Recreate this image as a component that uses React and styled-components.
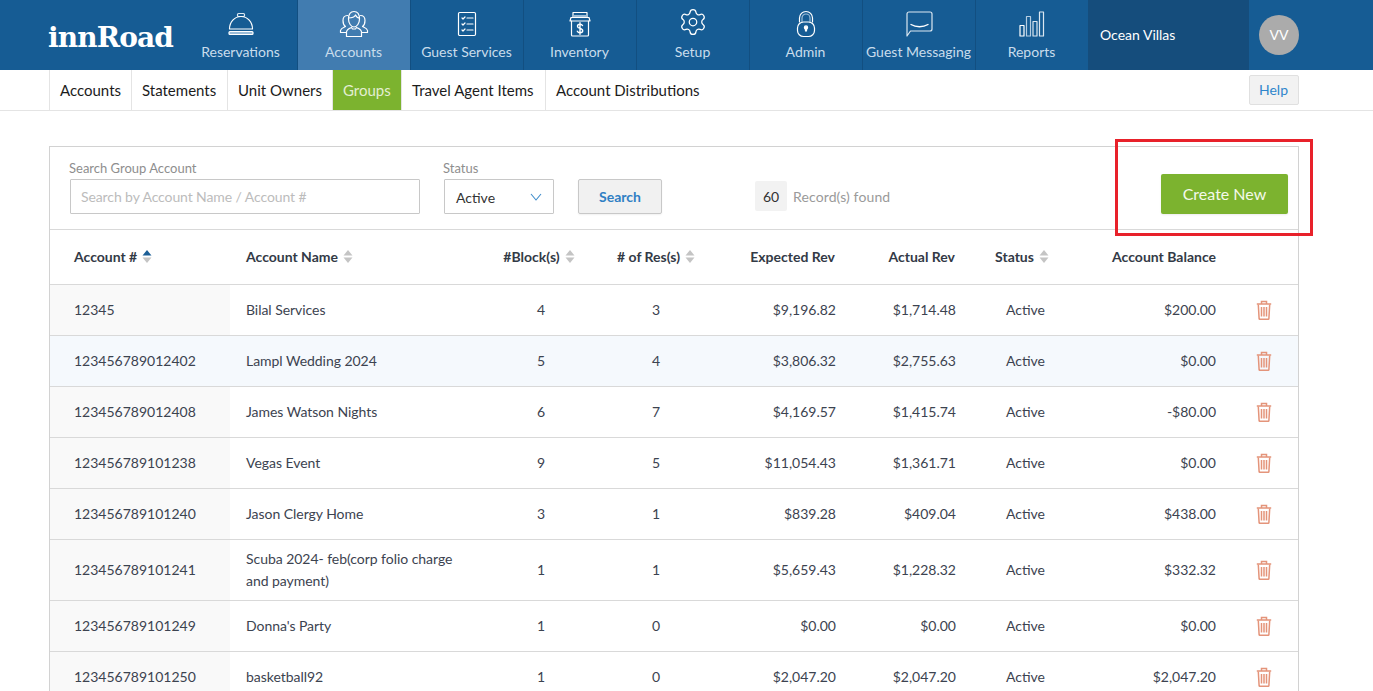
import styled, { createGlobalStyle } from 'styled-components';
import { Settings } from 'lucide-react';

const GlobalStyle = createGlobalStyle`
    html, body {
        margin: 0;
        height: 100%;
        overflow: hidden;
        background: #fff;
        font-family: Lato, "Open Sans", sans-serif;
        color: #3c4350;
    }
    * { box-sizing: border-box; }
`;

const Icon = ({ children }) => (
    <svg width="34" height="34" viewBox="0 0 34 34" fill="none" stroke="#fff" strokeWidth="1.2" strokeLinecap="round" strokeLinejoin="round">
        {children}
    </svg>
);

const BellIcon = () => (
    <Icon>
        <rect x="13.5" y="6.5" width="7" height="3" rx="1" stroke="#dbe7f1" />
        <path d="M5.5 22c0-7 5-12.5 11.5-12.5S28.5 15 28.5 22z" />
        <rect x="5" y="24.5" width="24" height="3" rx="1" fill="#9cbdd8" />
    </Icon>
);

const PeopleIcon = () => (
    <Icon>
        <path d="M11.5 12c0-5 2-7.5 5.5-7.5s5.5 2.5 5.5 7.5c0 4-2.5 8-5.5 8s-5.5-4-5.5-8z" />
        <path d="M11.5 11c3 0 6-1 7-3 .7 1.5 2.5 3 4 3" />
        <path d="M9.5 25c0-2.5 2.5-3.5 5-4.5l1 1.5h3l1-1.5c2.5 1 5 2 5 4.5v4.5h-15z" />
        <path d="M10.5 8.5c-3 0-4.5 2-4.5 5 0 2.5 1 5 2.5 6-1.500 1-4.500 1.500-5 4v2h6" />
        <path d="M23.5 8.5c3 0 4.5 2 4.5 5 0 2.5-1 5-2.5 6 1.500 1 4.500 1.500 5 4v2h-6" />
    </Icon>
);

const ChecklistIcon = () => (
    <Icon>
        <rect x="8.5" y="5.5" width="17" height="23" rx="1.2" />
        <path d="M12 11l1 1 2-2M12 17l1 1 2-2M12 23l1 1 2-2" />
        <path d="M17 11h6M17 17h6M17 23h6" />
    </Icon>
);

const InventoryIcon = () => (
    <Icon>
        <path d="M10 10V5.5h14V10" />
        <path d="M11 8h12v3H11z" fill="#9cbdd8" stroke="none" />
        <path d="M8 10.5h18l1 3.5H7z" />
        <path d="M8.5 14v14a1 1 0 0 0 1 1h15a1 1 0 0 0 1-1V14" />
        <path d="M19.5 18.5c-.5-1-1.5-1.3-2.5-1.3-1.5 0-2.5.7-2.5 2s1 1.8 2.5 2.2 2.7 1 2.7 2.3-1.2 2-2.7 2c-1.2 0-2.2-.5-2.7-1.5M17 15.8v11.4" strokeWidth="1.4" />
    </Icon>
);

const LockIcon = () => (
    <Icon>
        <path d="M10.5 15v-4a6.5 6.5 0 0 1 13 0v4" />
        <path d="M13 15v-4a4 4 0 0 1 8 0v4" stroke="#9cbdd8" />
        <rect x="8.5" y="15" width="17" height="14.5" rx="6" />
        <circle cx="17" cy="20.5" r="1.6" fill="#fff" />
        <path d="M16.5 21v3h1v-3" fill="#fff" />
    </Icon>
);

const ChatIcon = () => (
    <Icon>
        <path d="M5 7a2 2 0 0 1 2-2h21a2 2 0 0 1 2 2v15a2 2 0 0 1-2 2H8.5L5 29z" stroke="#dbe7f1" />
        <path d="M9 17.5c5 3 12 3 17 0" strokeWidth="1.4" />
    </Icon>
);

const BarsIcon = () => (
    <Icon>
        <rect x="5" y="18.5" width="4" height="10.5" />
        <rect x="11.5" y="9.5" width="4" height="19.5" stroke="#b4cde2" />
        <rect x="18" y="14.5" width="4" height="14.5" stroke="#dbe7f1" />
        <rect x="24.5" y="5" width="4" height="24" stroke="#dbe7f1" />
    </Icon>
);

const GearIcon = () => (
    <Settings size={30} color="#fff" strokeWidth={1} />
);

const NAV = [
    { label: 'Reservations', Glyph: BellIcon },
    { label: 'Accounts', Glyph: PeopleIcon, active: true },
    { label: 'Guest Services', Glyph: ChecklistIcon },
    { label: 'Inventory', Glyph: InventoryIcon },
    { label: 'Setup', Glyph: GearIcon },
    { label: 'Admin', Glyph: LockIcon },
    { label: 'Guest Messaging', Glyph: ChatIcon },
    { label: 'Reports', Glyph: BarsIcon },
];

const TABS = [
    { label: 'Accounts', width: 82 },
    { label: 'Statements', width: 96 },
    { label: 'Unit Owners', width: 105 },
    { label: 'Groups', width: 69 },
    { label: 'Travel Agent Items', width: 144 },
    { label: 'Account Distributions', width: 165 },
];

const ROWS = [
    ['12345', 'Bilal Services', '4', '3', '$9,196.82', '$1,714.48', '$200.00'],
    ['123456789012402', 'Lampl Wedding 2024', '5', '4', '$3,806.32', '$2,755.63', '$0.00'],
    ['123456789012408', 'James Watson Nights', '6', '7', '$4,169.57', '$1,415.74', '-$80.00'],
    ['123456789101238', 'Vegas Event', '9', '5', '$11,054.43', '$1,361.71', '$0.00'],
    ['123456789101240', 'Jason Clergy Home', '3', '1', '$839.28', '$409.04', '$438.00'],
    ['123456789101241', 'Scuba 2024- feb(corp folio charge and payment)', '1', '1', '$5,659.43', '$1,228.32', '$332.32'],
    ['123456789101249', "Donna's Party", '1', '0', '$0.00', '$0.00', '$0.00'],
    ['123456789101250', 'basketball92', '1', '0', '$2,047.20', '$2,047.20', '$2,047.20'],
];

const SortIcon = ({ active }) => (
    <SortSvg width="10" height="13" viewBox="0 0 10 13">
        <path d="M5 0l4.5 5.5h-9z" fill={active ? '#1b5e96' : '#c4c4c4'} />
        <path d="M5 13L.5 7.5h9z" fill="#c4c4c4" />
    </SortSvg>
);

const TrashIcon = () => (
    <svg width="16" height="20" viewBox="0 0 16 20" fill="none" stroke="#e4947a" strokeWidth="1.5">
        <path d="M.8 4h14.4M5.5 3.5V1.500h5v2" />
        <path d="M2.3 4.5l.8 14a1 1 0 0 0 1 .8h7.800a1 1 0 0 0 1-.8l.8-14" />
        <path d="M5.5 7v9.5M8 7v9.5M10.5 7v9.5" />
    </svg>
);

const App = () => {
    return (
        <Page>
            <GlobalStyle />
            <Header>
                <Logo>innRoad</Logo>
                <Nav>
                    {NAV.map(({ label, Glyph, active }) => (
                        <NavItem key={label} $active={active}>
                            <NavIcon><Glyph /></NavIcon>
                            <NavLabel>{label}</NavLabel>
                        </NavItem>
                    ))}
                </Nav>
                <Property>Ocean Villas</Property>
                <Avatar>VV</Avatar>
            </Header>

            <SubNav>
                {TABS.map((tab) => (
                    <Tab key={tab.label} $width={tab.width} $active={tab.label === 'Groups'}>{tab.label}</Tab>
                ))}
                <HelpButton>Help</HelpButton>
            </SubNav>

            <Panel>
                <FilterBar>
                    <SearchField>
                        <FieldLabel>Search Group Account</FieldLabel>
                        <SearchInput placeholder="Search by Account Name / Account #" />
                    </SearchField>
                    <StatusField>
                        <FieldLabel>Status</FieldLabel>
                        <StatusBox>
                            <StatusValue>Active</StatusValue>
                            <svg width="12" height="8" viewBox="0 0 12 8" fill="none" stroke="#3f8ccb" strokeWidth="1.1">
                                <path d="M1 1l5 6 5-6" />
                            </svg>
                        </StatusBox>
                    </StatusField>
                    <SearchButton>Search</SearchButton>
                    <Records>
                        <Count>60</Count>
                        <RecordsText>Record(s) found</RecordsText>
                    </Records>
                    <CreateButton>Create New</CreateButton>
                </FilterBar>
                <Highlight />

                <HeadRow>
                    <HeadCell $left="24px">Account #<SortIcon active /></HeadCell>
                    <HeadCell $left="16px">Account Name<SortIcon /></HeadCell>
                    <HeadCell $align="center" $right="2px">#Block(s)<SortIcon /></HeadCell>
                    <HeadCell $align="center"># of Res(s)<SortIcon /></HeadCell>
                    <HeadCell $align="flex-end" $right="16px">Expected Rev</HeadCell>
                    <HeadCell $align="flex-end" $right="16px">Actual Rev</HeadCell>
                    <HeadCell $align="center" $right="7px">Status<SortIcon /></HeadCell>
                    <HeadCell $align="flex-end" $right="15px">Account Balance</HeadCell>
                    <span />
                </HeadRow>

                {ROWS.map((row, i) => (
                    <Row key={row[0]} $hovered={i === 1}>
                        <IdCell $hovered={i === 1}>{row[0]}</IdCell>
                        <NameCell>{row[1]}</NameCell>
                        <Cell $align="center" $left="2px">{row[2]}</Cell>
                        <Cell $align="center">{row[3]}</Cell>
                        <Cell $align="flex-end" $right="15px">{row[4]}</Cell>
                        <Cell $align="flex-end" $right="15px">{row[5]}</Cell>
                        <Cell $align="center">Active</Cell>
                        <Cell $align="flex-end" $right="15px">{row[6]}</Cell>
                        <TrashCell><TrashIcon /></TrashCell>
                    </Row>
                ))}
            </Panel>
        </Page>
    );
};

export default App;

const COLUMNS = '180px 250px 120px 112px 139px 120px 109px 151px 67px';

const Page = styled.div`
    height: 100vh;
    overflow: hidden;
`;

const Header = styled.header`
    display: flex;
    height: 70px;
    background: #165c94;
`;

const Logo = styled.div`
    width: 185px;
    padding: 21px 0 0 48px;
    font-family: "DejaVu Serif", serif;
    font-weight: 700;
    font-size: 28px;
    line-height: 34px;
    letter-spacing: -0.85px;
    color: #fff;
    white-space: nowrap;
`;

const Nav = styled.nav`
    display: flex;
`;

const NavItem = styled.div`
    width: 113px;
    display: flex;
    flex-direction: column;
    align-items: center;
    background: ${(p) => (p.$active ? '#417cb0' : 'transparent')};
    border-right: 1px solid #124f81;
    &:last-child {
        width: 112px;
        border-right: 0;
    }
`;

const NavIcon = styled.div`
    height: 43px;
    margin-right: 1px;
    padding-top: 7px;
    display: flex;
    justify-content: center;
`;

const NavLabel = styled.span`
    margin-right: 1px;
    font-size: 14px;
    line-height: 18px;
    color: #c9dcec;
    white-space: nowrap;
`;

const Property = styled.div`
    width: 161px;
    padding: 0 0 2px 12px;
    display: flex;
    align-items: center;
    background: #154d7c;
    color: #fff;
    font-size: 14px;
`;

const Avatar = styled.div`
    width: 40px;
    height: 40px;
    margin: 15px 0 0 10px;
    padding-bottom: 1px;
    border-radius: 50%;
    background: #ababab;
    color: #fff;
    font-size: 14px;
    display: flex;
    align-items: center;
    justify-content: center;
`;

const SubNav = styled.div`
    display: flex;
    align-items: stretch;
    height: 41px;
    padding: 0 74px 0 49px;
    border-bottom: 1px solid #e4e4e4;
`;

const Tab = styled.div`
    width: ${(p) => p.$width}px;
    padding-left: 10px;
    display: flex;
    align-items: center;
    font-size: 15px;
    color: ${(p) => (p.$active ? '#e3eed2' : '#1c1c1c')};
    background: ${(p) => (p.$active ? '#7cb32f' : '#fff')};
    border-left: 1px solid #e4e4e4;
    white-space: nowrap;
`;

const HelpButton = styled.div`
    margin: 5px 0 5px auto;
    width: 50px;
    height: 30px;
    padding: 0 1px 1px 0;
    display: flex;
    align-items: center;
    justify-content: center;
    font-size: 14px;
    color: #2f86cc;
    background: #f2f2f2;
    border: 1px solid #e0e0e0;
    border-radius: 2px;
`;

const Panel = styled.section`
    position: relative;
    margin: 35px 74px 0 49px;
    border: 1px solid #d2d2d2;
    border-bottom: 0;
`;

const FilterBar = styled.div`
    display: flex;
    align-items: flex-end;
    height: 83px;
    padding: 0 10px 15px 20px;
    border-bottom: 1px solid #d9d9d9;
`;

const SearchField = styled.div`
    width: 350px;
`;

const StatusField = styled.div`
    width: 110px;
    margin-left: 24px;
`;

const FieldLabel = styled.div`
    margin: 0 0 2px -1px;
    font-size: 13px;
    line-height: 17px;
    color: #8e8e8e;
    white-space: nowrap;
`;

const SearchInput = styled.input`
    display: block;
    width: 100%;
    height: 35px;
    padding: 0 10px;
    border: 1px solid #c8c8c8;
    border-radius: 1px;
    font-family: inherit;
    font-size: 14px;
    letter-spacing: -0.1px;
    outline: none;
    &::placeholder {
        color: #bcbcbc;
        opacity: 1;
    }
`;

const StatusBox = styled.div`
    height: 35px;
    padding: 0 11px;
    display: flex;
    align-items: center;
    justify-content: space-between;
    border: 1px solid #c8c8c8;
    border-radius: 1px;
    font-size: 14px;
    color: #333;
`;

const StatusValue = styled.span`
    padding-top: 2px;
`;

const SearchButton = styled.button`
    width: 84px;
    height: 35px;
    margin-left: 24px;
    background: #f1f1f1;
    border: 1px solid #c8c8c8;
    border-radius: 2px;
    box-shadow: 0 1px 2px rgba(0, 0, 0, 0.06);
    font-family: inherit;
    font-size: 14px;
    font-weight: 700;
    color: #2f7fc4;
`;

const Records = styled.div`
    display: flex;
    align-items: center;
    margin: 0 0 3px 93px;
    font-size: 14px;
`;

const Count = styled.span`
    width: 32px;
    height: 30px;
    display: flex;
    align-items: center;
    justify-content: center;
    background: #f2f2f2;
    border-radius: 2px;
    color: #333;
`;

const RecordsText = styled.span`
    margin-left: 6px;
    letter-spacing: 0.12px;
    color: #9a9a9a;
`;

const CreateButton = styled.button`
    width: 127px;
    height: 40px;
    margin-left: auto;
    padding-bottom: 3px;
    background: #7cb32f;
    border: 0;
    border-radius: 2px;
    box-shadow: 0 1px 2px rgba(0, 0, 0, 0.08);
    font-family: inherit;
    font-size: 16px;
    color: #f4f9ea;
`;

const Highlight = styled.div`
    position: absolute;
    left: 1065px;
    top: -8px;
    width: 198px;
    height: 97px;
    border: 3px solid #e8212a;
    pointer-events: none;
`;

const HeadRow = styled.div`
    display: grid;
    grid-template-columns: ${COLUMNS};
    height: 55px;
    border-bottom: 1px solid #d9d9d9;
`;

const HeadCell = styled.div`
    display: flex;
    align-items: center;
    justify-content: ${(p) => p.$align || 'flex-start'};
    padding: 0 ${(p) => p.$right || '0'} 2px ${(p) => p.$left || '0'};
    font-size: 14px;
    font-weight: 700;
    color: #333a46;
    white-space: nowrap;
`;

const SortSvg = styled.svg`
    margin-left: 5px;
`;

const Row = styled.div`
    display: grid;
    grid-template-columns: ${COLUMNS};
    min-height: 51px;
    background: ${(p) => (p.$hovered ? '#f5f9fd' : '#fff')};
    border-bottom: 1px solid #d9d9d9;
`;

const Cell = styled.div`
    display: flex;
    align-items: center;
    justify-content: ${(p) => p.$align || 'flex-start'};
    padding: 0 ${(p) => p.$right || '0'} 2px ${(p) => p.$left || '0'};
    font-size: 14px;
    color: #3c4350;
`;

const IdCell = styled(Cell)`
    padding-left: 24px;
    background: ${(p) => (p.$hovered ? 'transparent' : '#f9f9f9')};
`;

const NameCell = styled(Cell)`
    padding: 8px 24px 8px 16px;
    line-height: 22px;
    letter-spacing: -0.04px;
`;

const TrashCell = styled(Cell)`
    justify-content: center;
    padding: 0 2px 0 0;
`;
